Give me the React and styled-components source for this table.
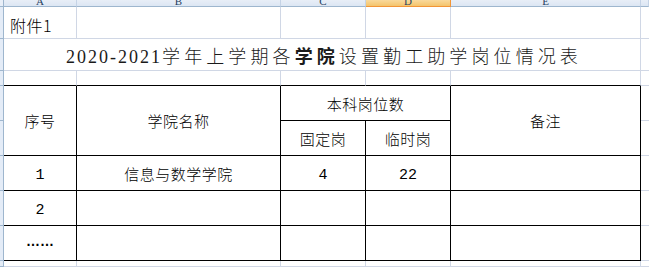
import styled, { createGlobalStyle } from 'styled-components';

const GRID = '#d0d7e5';
const HEAD_LINE = '#9eb6ce';
const INK = '#000';

const GlobalStyle = createGlobalStyle`
  html, body {
    margin: 0;
    padding: 0;
    background: #fff;
  }
  * {
    box-sizing: border-box;
  }
`;

const Sheet = styled.div`
  display: grid;
  grid-template-columns: 4px 73px 204px 85px 85px 190px 1fr;
  grid-template-rows: 7px 32px 32px 15px 35px 35px 35px 35px 35px 1fr;
  width: 649px;
  height: 267px;
  overflow: hidden;
  background: #fff;
  font-family: "Noto Sans CJK SC", sans-serif;
  color: ${INK};
`;

const Corner = styled.div`
  background: #e9eff8;
  border-right: 1px solid ${HEAD_LINE};
  border-bottom: 1px solid ${HEAD_LINE};
`;

const ColHead = styled.div`
  display: flex;
  align-items: flex-end;
  justify-content: center;
  overflow: hidden;
  background: ${(p) => (p.$active ? 'linear-gradient(#f9d99c, #f4c46c)' : 'linear-gradient(#e8eef7, #dce6f3)')};
  border-right: 1px solid ${(p) => (p.$active ? '#f29536' : '#c5d3e6')};
  border-bottom: 1px solid ${(p) => (p.$active ? '#f29536' : HEAD_LINE)};
  font-family: "Liberation Serif", serif;
  font-size: 11px;
  line-height: 11px;
  color: #27415f;

  span {
    display: block;
    margin-bottom: -1px;
  }
`;

const RowHead = styled.div`
  background: #e4ecf7;
  border-right: 1px solid ${HEAD_LINE};
  border-bottom: 1px solid ${HEAD_LINE};
`;

const Cell = styled.div`
  display: flex;
  align-items: ${(p) => p.$valign || 'center'};
  justify-content: ${(p) => p.$align || 'center'};
  grid-column: span ${(p) => p.$cols || 1};
  grid-row: span ${(p) => p.$rows || 1};
  border-right: ${(p) => (p.$noRight ? 'none' : `1px solid ${p.$ink ? INK : GRID}`)};
  border-bottom: 1px solid ${(p) => (p.$inkBottom || p.$ink ? INK : GRID)};
  font-size: 15px;
  letter-spacing: 0.5px;
  font-weight: 300;
  white-space: nowrap;
`;

const Note = styled.span`
  padding: 0 0 1px 6px;
  font-size: 16px;
  letter-spacing: 0.5px;
`;

const Title = styled.span`
  font-family: "Liberation Serif", "Noto Sans CJK SC", serif;
  font-size: 18px;
  letter-spacing: 4.1px;
  color: #1a1a1a;
  font-weight: 300;
  margin-left: 4px;

  b {
    font-weight: 700;
  }
`;

const Year = styled.span`
  letter-spacing: 2px;
  font-weight: 400;
`;

const Digit = styled.span`
  font-family: "Liberation Mono", "Noto Sans CJK SC", monospace;
  font-size: 15px;
  letter-spacing: 0;
  margin-top: 4px;
`;

const Dots = styled.span`
  font-family: "Liberation Sans", sans-serif;
  font-size: 14px;
  font-weight: 700;
  letter-spacing: 0;
  margin-top: -4px;
`;

const columns = ['A', 'B', 'C', 'D', 'E'];

const GridRow = ({ inkBottom }) => (
  <>
    <RowHead />
    {columns.map((c) => (
      <Cell key={c} $inkBottom={inkBottom} />
    ))}
    <Cell $noRight />
  </>
);

const DataRow = ({ no, name, fixed, temp }) => (
  <>
    <RowHead />
    <Cell $ink>{no}</Cell>
    <Cell $ink>{name}</Cell>
    <Cell $ink>{fixed}</Cell>
    <Cell $ink>{temp}</Cell>
    <Cell $ink />
    <Cell $noRight />
  </>
);

const App = () => {
  return (
    <>
      <GlobalStyle />
      <Sheet>
        <Corner />
        {columns.map((c) => (
          <ColHead key={c} $active={c === 'D'}>
            <span>{c}</span>
          </ColHead>
        ))}
        <ColHead />

        <RowHead />
        <Cell $align="flex-start" $valign="flex-end">
          <Note>附件1</Note>
        </Cell>
        <Cell />
        <Cell />
        <Cell />
        <Cell />
        <Cell $noRight />

        <RowHead />
        <Cell $cols={5}>
          <Title>
            <Year>2020-2021</Year>学年上学期各<b>学院</b>设置勤工助学岗位情况表
          </Title>
        </Cell>
        <Cell $noRight />

        <GridRow inkBottom />

        <RowHead />
        <Cell $ink $rows={2}>序号</Cell>
        <Cell $ink $rows={2}>学院名称</Cell>
        <Cell $ink $cols={2}>本科岗位数</Cell>
        <Cell $ink $rows={2}>备注</Cell>
        <Cell $noRight />

        <RowHead />
        <Cell $ink>固定岗</Cell>
        <Cell $ink>临时岗</Cell>
        <Cell $noRight />

        <DataRow no={<Digit>1</Digit>} name="信息与数学学院" fixed={<Digit>4</Digit>} temp={<Digit>22</Digit>} />
        <DataRow no={<Digit>2</Digit>} />
        <DataRow no={<Dots>……</Dots>} />

        <GridRow />
      </Sheet>
    </>
  );
};

export default App;
